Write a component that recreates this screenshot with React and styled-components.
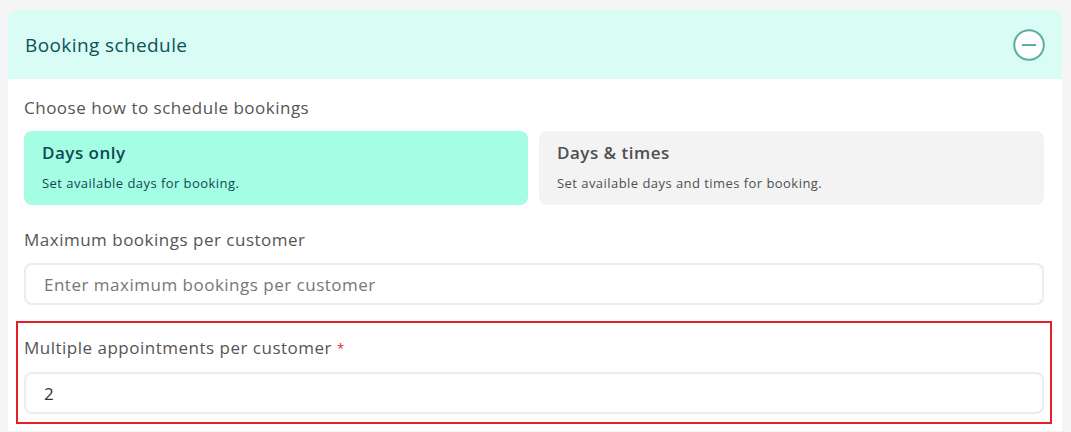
import React from "react";
import styled, { createGlobalStyle } from "styled-components";

const Global = createGlobalStyle`
  html, body { margin: 0; padding: 0; background: #f5f5f5; }
  body { font-family: "Open Sans", "Noto Sans", sans-serif; }
  * { box-sizing: border-box; }
`;

const Page = styled.div`
  padding: 10px 9px 0 8px;
  width: 1071px;
`;

const Card = styled.section`
  background: #ffffff;
  border-radius: 8px 8px 0 0;
  overflow: hidden;
`;

const Header = styled.div`
  height: 69px;
  background: #d9fcf4;
  display: flex;
  align-items: center;
  justify-content: space-between;
  padding: 0 17px 0 17px;
`;

const Title = styled.h2`
  margin: 0;
  font-size: 19px;
  letter-spacing: 0.4px;
  font-weight: 400;
  color: #0b535a;
`;

const CollapseButton = styled.button`
  width: 32px;
  height: 32px;
  padding: 0;
  border: none;
  background: transparent;
  display: flex;
  align-items: center;
  justify-content: center;
  cursor: pointer;
`;

const Body = styled.div`
  padding: 17px 18px 7px 16px;
  display: flex;
  flex-direction: column;
`;

const Label = styled.div`
  font-size: 17px;
  letter-spacing: 0.5px;
  color: #555555;
  line-height: 24px;
  margin-bottom: ${(p) => p.$gap ?? 11}px;
`;

const Req = styled.span`
  color: #e4252b;
  font-size: 13px;
  vertical-align: top;
  margin-left: 5px;
`;

const Options = styled.div`
  display: grid;
  grid-template-columns: 504px 1fr;
  gap: 11px;
  margin-bottom: 23px;
`;

const Option = styled.div`
  height: 74px;
  border-radius: 8px;
  padding: 11px 18px 0 18px;
  background: ${(p) => (p.$active ? "#a5fde4" : "#f3f3f3")};
  color: ${(p) => (p.$active ? "#0c4a51" : "#4f4f4f")};
  display: flex;
  flex-direction: column;
  gap: 10px;
`;

const OptionTitle = styled.div`
  font-size: 17px;
  letter-spacing: 0.5px;
  font-weight: 600;
  line-height: 22px;
`;

const OptionText = styled.div`
  font-size: 13px;
  letter-spacing: 0.45px;
  line-height: 18px;
`;

const Input = styled.input`
  width: 100%;
  height: 42px;
  border: 2px solid #ececec;
  border-radius: 8px;
  padding: 0 18px;
  font-family: inherit;
  font-size: 17px;
  letter-spacing: 0.5px;
  color: #333;
  background: #fff;
  outline: none;
  &::placeholder { color: #777777; }
`;

const Field = styled.div`
  display: flex;
  flex-direction: column;
  margin-bottom: 16px;
`;

const Highlight = styled.div`
  margin: 0 -8px;
  padding: 13px 6px 8px 6px;
  border: 2px solid #e61e25;
  display: flex;
  flex-direction: column;
`;

export default function App() {
  return (
    <>
      <Global />
      <Page>
        <Card>
          <Header>
            <Title>Booking schedule</Title>
            <CollapseButton aria-label="Collapse">
              <svg width="32" height="32" viewBox="0 0 32 32">
                <circle cx="16" cy="16" r="14.8" fill="#ffffff" stroke="#5aaea4" strokeWidth="2" />
                <line x1="9" y1="16" x2="23" y2="16" stroke="#5aaea4" strokeWidth="2.2" />
              </svg>
            </CollapseButton>
          </Header>
          <Body>
            <Label>Choose how to schedule bookings</Label>
            <Options>
              <Option $active>
                <OptionTitle>Days only</OptionTitle>
                <OptionText>Set available days for booking.</OptionText>
              </Option>
              <Option>
                <OptionTitle>Days &amp; times</OptionTitle>
                <OptionText>Set available days and times for booking.</OptionText>
              </Option>
            </Options>
            <Field>
              <Label>Maximum bookings per customer</Label>
              <Input placeholder="Enter maximum bookings per customer" />
            </Field>
            <Highlight>
              <Label $gap={12}>
                Multiple appointments per customer<Req>*</Req>
              </Label>
              <Input defaultValue="2" />
            </Highlight>
          </Body>
        </Card>
      </Page>
    </>
  );
}
